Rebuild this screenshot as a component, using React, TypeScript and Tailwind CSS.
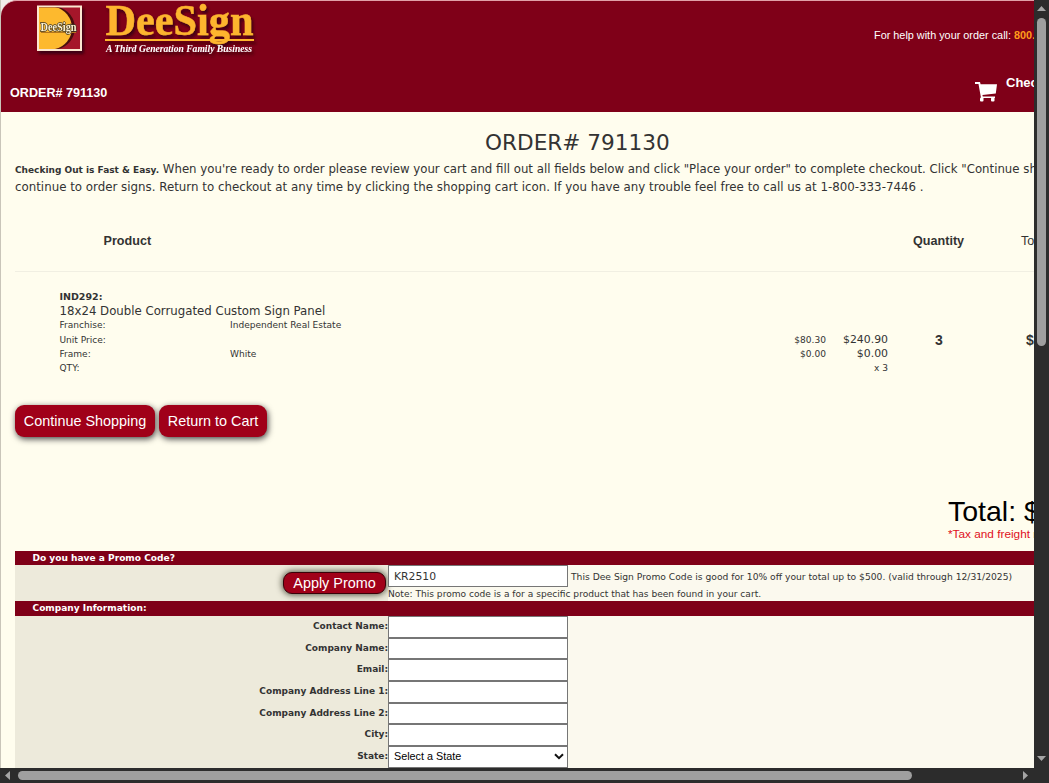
import type { ReactNode } from 'react';

const fields = [
  'Contact Name:',
  'Company Name:',
  'Email:',
  'Company Address Line 1:',
  'Company Address Line 2:',
  'City:',
];

const details = [
  { label: 'Franchise:', value: 'Independent Real Estate', unit: '', total: '' },
  { label: 'Unit Price:', value: '', unit: '$80.30', total: '$240.90' },
  { label: 'Frame:', value: 'White', unit: '$0.00', total: '$0.00' },
];

function Logo() {
  return (
    <svg width="260" height="60" viewBox="1 1 260 60" className="block overflow-visible">
      <defs>
        <filter id="shadow" x="-10%" y="-20%" width="125%" height="150%">
          <feDropShadow dx="2" dy="3" stdDeviation="1.5" floodColor="#2b0008" floodOpacity="0.75" />
        </filter>
        <clipPath id="badge">
          <rect x="39" y="7.5" width="41" height="41.5" />
        </clipPath>
      </defs>
      {/* Square badge */}
      <g filter="url(#shadow)">
        <rect x="37" y="5.5" width="45" height="45.5" fill="#fbe6cf" />
        <rect x="39" y="7.5" width="41" height="41.5" fill="#a5182c" />
        <g clipPath="url(#badge)">
          <path d="M39 7h19a21.500 21.500 0 0 1 0 42H39z" fill="#4a1010" />
          <path d="M39 7h16a21.500 21.500 0 0 1 0 42H39z" fill="#fdb92e" />
        </g>
        <rect x="41" y="32" width="35" height="1" fill="#b3741c" />
        <text
          x="40.5"
          y="30.5"
          fontSize="12"
          fontWeight="bold"
          fontFamily="Liberation Serif, serif"
          textLength="36"
          lengthAdjust="spacingAndGlyphs"
          fill="#fff3d0"
          stroke="#3c3424"
          strokeWidth="1.4"
          paintOrder="stroke"
        >
          DeeSign
        </text>
      </g>
      {/* Wordmark */}
      <g filter="url(#shadow)" fill="#fdb52f">
        <text
          x="105.5"
          y="35"
          fontSize="45"
          fontWeight="bold"
          fontFamily="Liberation Serif, serif"
          textLength="148"
          lengthAdjust="spacingAndGlyphs"
          stroke="#fdb52f"
          strokeWidth="0.5"
        >
          DeeSign
        </text>
        <rect x="105" y="39" width="149" height="2" />
        <text
          x="106"
          y="52"
          fontSize="11"
          fontStyle="italic"
          fontWeight="bold"
          fontFamily="Liberation Serif, serif"
          textLength="146"
          lengthAdjust="spacingAndGlyphs"
          fill="#fff"
        >
          A Third Generation Family Business
        </text>
      </g>
    </svg>
  );
}

function CartIcon() {
  return (
    <svg width="22" height="20" viewBox="0 0 22 20" className="mt-[8px] shrink-0" fill="#fff">
      <path d="M0 0h5l.6 2.200H22l-1.200 9.300L7.400 13l.4 1.500H20V16H6L3.500 2H0z" />
      <rect x="5" y="15.500" width="3.500" height="4" rx="1" />
      <rect x="16" y="15.500" width="3.500" height="4" rx="1" />
    </svg>
  );
}

function Header() {
  return (
    <header className="flex h-[112px] justify-between rounded-tl-[16px] border-t border-[#e0a0a8] bg-[#7f0018] font-['Liberation_Sans',sans-serif] text-white">
      <div className="flex flex-col">
        <Logo />
        <h2 className="mt-[24px] pl-[9px] text-[12.6px] leading-[17px] font-bold">ORDER# 791130</h2>
      </div>
      <div className="flex w-[160px] flex-col">
        <p className="mt-[27px] text-[10.86px] leading-[14px]">
          For help with your order call: <b className="text-[#ff9c1a]">800.333.7446</b>
        </p>
        <div className="mt-[32px] ml-[101px] flex">
          <CartIcon />
          <b className="ml-[9px] text-[13px] leading-[18px]">Checkout</b>
        </div>
      </div>
    </header>
  );
}

function RedButton({ className, children }: { className: string; children: ReactNode }) {
  return (
    <button
      className={`bg-[#a00019] font-['Liberation_Sans',sans-serif] text-[14.4px] text-white ${className}`}
    >
      {children}
    </button>
  );
}

function SectionBar({ className, children }: { className: string; children: ReactNode }) {
  return (
    <div className={`bg-[#7f0018] pl-[17.5px] text-[9.06px] font-bold text-white ${className}`}>{children}</div>
  );
}

function CartItem() {
  return (
    <div className="flex h-[116px] pt-[18px]">
      <div className="w-[873px] shrink-0 pl-[44.5px]">
        <p className="text-[9.5px] leading-[14px] font-bold">IND292:</p>
        <p className="text-[11.76px] leading-[15px]">18x24 Double Corrugated Custom Sign Panel</p>
        <div className="-mt-px">
          {details.map((d) => (
            <div key={d.label} className="flex h-[14.6px] items-center text-[9.05px] leading-[12px]">
              <span className="w-[170.5px]">{d.label}</span>
              <span className="w-[500px]">{d.value}</span>
              <span className="w-[96px] text-right">{d.unit}</span>
              <span className="w-[62px] text-right text-[10.88px]">{d.total}</span>
            </div>
          ))}
          <div className="flex h-[14.6px] items-center text-[9.05px]">
            <span className="w-[170px]">QTY:</span>
            <span className="w-[658.5px] text-right">x 3</span>
          </div>
        </div>
      </div>
      <div className="ml-[47px] flex pt-[42px] font-['Liberation_Sans',sans-serif] text-[14px] leading-[16px] font-bold">
        <span className="w-[91px]">3</span>
        <span>$240.90</span>
      </div>
    </div>
  );
}

function Checkout() {
  return (
    <div>
      <SectionBar className="h-[14px] leading-[14px]">Do you have a Promo Code?</SectionBar>
      <div className="flex h-[36px] bg-[#fbf9ee]">
        <div className="flex w-[373px] shrink-0 justify-end bg-[#edeadb] pr-[2px]">
          <RedButton className="mt-[7px] h-[22px] w-[103px] rounded-[9px] border border-[#3a0008] shadow-[0_0_6px_1px_#555544]">
            Apply Promo
          </RedButton>
        </div>
        <div className="text-[9.19px]">
          <div className="flex h-[22px]">
            <input
              className="h-[22px] w-[180px] border border-[#767676] bg-white px-[5px] text-[10.8px]"
              defaultValue="KR2510"
            />
            <span className="ml-[3px] leading-[23px]">
              This Dee Sign Promo Code is good for 10% off your total up to $500. (valid through 12/31/2025)
            </span>
          </div>
          <p className="text-[9.08px] leading-[14px]">
            Note: This promo code is a for a specific product that has been found in your cart.
          </p>
        </div>
      </div>
      <SectionBar className="h-[15px] leading-[14px]">Company Information:</SectionBar>
      <div className="bg-[#fbf9ee] text-[9px]">
        {fields.map((f) => (
          <div key={f} className="flex h-[21.66px]">
            <label className="w-[373px] bg-[#edeadb] text-right leading-[20px] font-bold">{f}</label>
            <input className="w-[180px] border border-[#767676] bg-white" />
          </div>
        ))}
        <div className="flex h-[22px]">
          <label className="w-[373px] bg-[#edeadb] text-right leading-[20px] font-bold">State:</label>
          <div className="flex w-[180px] items-center justify-between border border-[#767676] bg-white pr-[3px] pb-px pl-[5px] font-['Liberation_Sans',sans-serif] text-[10.8px] text-black">
            Select a State
            <svg width="10" height="7" viewBox="0 0 10 7" fill="none" stroke="#111" strokeWidth="2">
              <path d="M1 1.2l4 4 4-4" />
            </svg>
          </div>
        </div>
      </div>
    </div>
  );
}

function Scrollbars() {
  return (
    <>
      <div className="col-start-2 row-start-1 flex flex-col items-center bg-[#2c2c2c]">
        <svg width="9" height="5" className="mt-[6px]" fill="#a5a5a5">
          <path d="M4.500 0L9 5H0z" />
        </svg>
        <div className="mt-[7px] h-[328px] w-[9px] rounded-full bg-[#9f9f9f]" />
        <svg width="9" height="5" className="mt-auto mb-[7px]" fill="#a5a5a5">
          <path d="M0 0h9L4.500 5z" />
        </svg>
      </div>
      <div className="col-span-2 flex items-center bg-[#2c2c2c]">
        <svg width="5" height="9" className="ml-[5px]" fill="#a5a5a5">
          <path d="M5 0v9L0 4.500z" />
        </svg>
        <div className="ml-[8px] h-[9px] w-[894px] rounded-full bg-[#9f9f9f]" />
        <svg width="5" height="9" className="ml-[111px]" fill="#a5a5a5">
          <path d="M0 0l5 4.500L0 9z" />
        </svg>
      </div>
    </>
  );
}

export default function App() {
  return (
    <div className="grid h-[783px] w-[1049px] grid-cols-[1034px_15px] grid-rows-[768px_15px] overflow-hidden bg-[#f2ece8]">
      <div className="overflow-hidden border-l border-[#c9c5b9] font-['DejaVu_Sans',sans-serif] whitespace-nowrap text-[#333]">
        <Header />
        <main className="h-[660px] bg-[#fffdee] pl-[14px]">
          <h1 className="h-[49px] pt-[17px] pl-[470px] text-[21.6px] leading-[28px]">ORDER# 791130</h1>
          <p className="text-[11.76px] leading-[17px]">
            <b className="text-[9px]">Checking Out is Fast &amp; Easy.</b> When you're ready to order please review your
            cart and fill out all fields below and click "Place your order" to complete checkout. Click "Continue
            shopping" to
          </p>
          <p className="text-[11.83px] leading-[17px]">
            continue to order signs. Return to checkout at any time by clicking the shopping cart icon. If you have any
            trouble feel free to call us at 1-800-333-7446 .
          </p>

          <div className="flex h-[76px] border-b border-[#f1efe2] pt-[37px] font-['Liberation_Sans',sans-serif] text-[12.6px] leading-[17px] font-bold">
            <span className="w-[810px] shrink-0 pl-[88.500px]">Product</span>
            <span className="w-[108px] shrink-0 pl-[88px]">Quantity</span>
            <span className="pl-[88px] font-normal">Total</span>
          </div>

          <CartItem />

          <div className="mt-[17px] flex gap-[4px]">
            <RedButton className="h-[32px] w-[140px] rounded-[9px] pt-px shadow-[1px_2px_6px_#444]">
              Continue Shopping
            </RedButton>
            <RedButton className="h-[32px] w-[108px] rounded-[9px] pt-px shadow-[1px_2px_6px_#444]">
              Return to Cart
            </RedButton>
          </div>

          <div className="mt-[57px] h-[57px] pl-[933px] font-['Liberation_Sans',sans-serif]">
            <p className="text-[28.5px] leading-[34px] text-black">Total: $240.90</p>
            <p className="text-[11.8px] leading-[12px] text-[#e0101c]">*Tax and freight not included</p>
          </div>

          <Checkout />
        </main>
      </div>
      <Scrollbars />
    </div>
  );
}
